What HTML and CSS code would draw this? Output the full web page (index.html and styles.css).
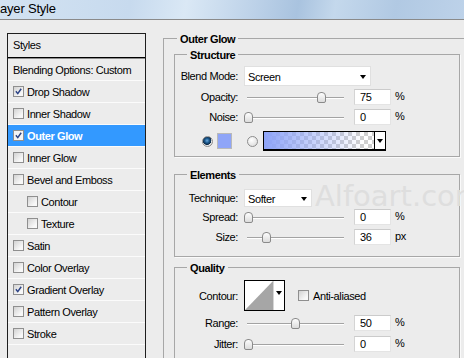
FILE: index.html
```html
<!DOCTYPE html>
<html lang="en">
<head>
    <meta charset="UTF-8">
    <title>Layer Style</title>
    <link rel="stylesheet" href="styles.css">
</head>
<body>

    <div class="titlebar"><span class="title">Layer Style</span></div>

    <div class="dialog">

        <div class="styles-list">
            <div class="list-head">Styles</div>
            <div class="list-item first">Blending Options: Custom</div>
            <div class="list-item"><span class="cb on"><svg viewBox="0 0 11 11"><path d="M2.3 5.3l2.3 2.8 4.2-6"/></svg></span>Drop Shadow</div>
            <div class="list-item"><span class="cb"></span>Inner Shadow</div>
            <div class="list-item selected"><span class="cb on"><svg viewBox="0 0 11 11"><path d="M2.3 5.3l2.3 2.8 4.2-6"/></svg></span>Outer Glow</div>
            <div class="list-item"><span class="cb"></span>Inner Glow</div>
            <div class="list-item"><span class="cb"></span>Bevel and Emboss</div>
            <div class="list-item sub"><span class="cb"></span>Contour</div>
            <div class="list-item sub"><span class="cb"></span>Texture</div>
            <div class="list-item"><span class="cb"></span>Satin</div>
            <div class="list-item"><span class="cb"></span>Color Overlay</div>
            <div class="list-item"><span class="cb on"><svg viewBox="0 0 11 11"><path d="M2.3 5.3l2.3 2.8 4.2-6"/></svg></span>Gradient Overlay</div>
            <div class="list-item"><span class="cb"></span>Pattern Overlay</div>
            <div class="list-item"><span class="cb"></span>Stroke</div>
            <div class="list-item"></div>
        </div>

        <div class="group outer">
            <div class="group-title">Outer Glow</div>

            <div class="group inner structure">
                <div class="group-title">Structure</div>
                <div class="field blend">
                    <label>Blend Mode:</label>
                    <div class="select blend-select">Screen</div>
                </div>
                <div class="field">
                    <label>Opacity:</label>
                    <div class="slider"><span class="thumb" style="left: 77px"></span></div>
                    <div class="num">75</div><span class="unit">%</span>
                </div>
                <div class="field">
                    <label>Noise:</label>
                    <div class="slider"><span class="thumb" style="left: 4px"></span></div>
                    <div class="num">0</div><span class="unit">%</span>
                </div>
                <div class="color-row">
                    <span class="radio on"></span>
                    <span class="swatch"></span>
                    <span class="radio second"></span>
                    <div class="gradient">
                        <span class="fill"></span>
                        <span class="drop"></span>
                    </div>
                </div>
            </div>

            <div class="group inner elements">
                <div class="group-title">Elements</div>
                <div class="field technique">
                    <label>Technique:</label>
                    <div class="select technique-select">Softer</div>
                </div>
                <div class="field">
                    <label>Spread:</label>
                    <div class="slider"><span class="thumb" style="left: 4px"></span></div>
                    <div class="num">0</div><span class="unit">%</span>
                </div>
                <div class="field">
                    <label>Size:</label>
                    <div class="slider"><span class="thumb" style="left: 22px"></span></div>
                    <div class="num">36</div><span class="unit">px</span>
                </div>
            </div>

            <div class="group inner quality">
                <div class="group-title">Quality</div>
                <div class="field contour-row">
                    <label>Contour:</label>
                    <div class="contour">
                        <svg class="curve" viewBox="0 0 29 29" preserveAspectRatio="none"><polygon points="0,29 29,0 29,29"/></svg>
                        <span class="drop"></span>
                    </div>
                    <span class="cb aa"></span><span>Anti-aliased</span>
                </div>
                <div class="field range">
                    <label>Range:</label>
                    <div class="slider"><span class="thumb" style="left: 51px"></span></div>
                    <div class="num">50</div><span class="unit">%</span>
                </div>
                <div class="field">
                    <label>Jitter:</label>
                    <div class="slider"><span class="thumb" style="left: 4px"></span></div>
                    <div class="num">0</div><span class="unit">%</span>
                </div>
            </div>
        </div>

    </div>

    <div class="watermark">Alfoart.com</div>

</body>
</html>
```

FILE: styles.css
```css
* {
    box-sizing: border-box;
}

body {
    margin: 0;
    width: 464px;
    height: 358px;
    overflow: hidden;
    position: relative;
    background: #ececec;
    font-family: "Liberation Sans", Arial, sans-serif;
    font-size: 11px;
    letter-spacing: -0.4px;
    color: #000;
}

.titlebar {
    height: 20px;
    border-bottom: 1px solid #8a8a8a;
    background: linear-gradient(100deg, #d3e3f2 0%, #c7daee 28%, #dae8f5 40%, #bcd1e8 55%, #a9c3df 64%, #c4d8ec 72%, #b1c9e3 85%, #bdd2e9 100%);
    overflow: hidden;
}

.title {
    display: block;
    margin-left: -7px;
    font-size: 13px;
    line-height: 17px;
    letter-spacing: -0.2px;
}

.dialog {
    display: flex;
    align-items: flex-start;
}

/* left list */

.styles-list {
    flex: none;
    width: 139px;
    height: 340px;
    margin: 13px 0 0 7px;
    border: 1px solid #1e1e1e;
    overflow: hidden;
}

.list-head {
    height: 24px;
    line-height: 23px;
    padding-left: 5px;
    border-bottom: 1px solid #000;
}

.list-item {
    display: flex;
    align-items: center;
    gap: 3px;
    height: 22px;
    padding-left: 5px;
    border-bottom: 1px solid #fbfbfb;
}

.list-item.first {
    height: 23px;
    border-top: 1px solid #8c8c8c;
}

.list-item.sub {
    padding-left: 19px;
}

.list-item.selected {
    background: #3399ff;
    color: #fff;
    font-weight: bold;
}

.cb {
    flex: none;
    width: 11px;
    height: 11px;
    border: 1px solid #8f8f8f;
    background: linear-gradient(135deg, #d2d2d2, #f8f8f8 75%);
}

.cb svg {
    display: block;
    width: 9px;
    height: 9px;
}

.cb path {
    fill: none;
    stroke: #2b4285;
    stroke-width: 1.8;
}

.selected .cb {
    background: #f4f4f4;
}

/* group boxes */

.group {
    border: 1px solid #a7a7a7;
    box-shadow: 1px 1px 0 #fafafa;
}

.group-title {
    width: max-content;
    margin: -6px 0 0 3px;
    padding: 0 3px;
    line-height: 13px;
    background: #ececec;
    font-weight: bold;
}

.outer {
    flex: none;
    width: 308px;
    margin: 18px 0 0 17px;
    padding: 0 10px;
}

.inner {
    margin-top: 8px;
}

.inner .group-title {
    margin-left: 12px;
}

.structure {
    padding-bottom: 5px;
}

.structure .field.blend {
    margin-top: 4px;
}

.elements {
    margin-top: 17px;
    padding-bottom: 9px;
}

.quality {
    margin-top: 10px;
    padding-bottom: 12px;
}

.field {
    display: flex;
    align-items: center;
    height: 20px;
}

.field label {
    flex: none;
    width: 63px;
    margin-right: 6px;
    text-align: right;
}

.field.blend {
    margin-bottom: 1px;
}

.field.technique {
    height: 19px;
    margin-top: 6px;
}

.field.contour-row {
    height: 31px;
    margin-top: 5px;
    margin-bottom: 2px;
}

.select {
    display: flex;
    align-items: center;
    justify-content: space-between;
    height: 20px;
    padding: 2px 4px 0 3px;
    background: #fff;
    border: 1px solid #e0e0e0;
}

.select::after,
.drop::after {
    content: "";
    border-left: 3.5px solid transparent;
    border-right: 3.5px solid transparent;
    border-top: 4px solid #000;
}

.blend-select {
    width: 127px;
}

.technique-select {
    width: 68px;
    height: 18px;
}

.slider {
    flex: none;
    position: relative;
    width: 100px;
    height: 100%;
    margin-right: 10px;
}

.slider::before {
    content: "";
    position: absolute;
    left: 3px;
    right: 0;
    top: 50%;
    border-top: 1px solid #a3a3a3;
    border-bottom: 1px solid #fff;
}

.thumb {
    position: absolute;
    top: 50%;
    width: 9px;
    height: 11px;
    margin: -5px 0 0 -4px;
    border: 1px solid #8a8a8a;
    border-radius: 4px 4px 2px 2px;
    background: linear-gradient(#fdfdfd, #dcdcdc);
}

.num {
    flex: none;
    width: 37px;
    height: 16px;
    padding-left: 5px;
    line-height: 14px;
    background: #fff;
    border: 1px solid #e4e4e4;
    border-top-color: #cbcbcb;
    border-left-color: #d4d4d4;
}

.unit {
    margin: -2px 0 0 4px;
}

/* colour row */

.color-row {
    display: flex;
    align-items: center;
    height: 20px;
    margin-top: 4px;
    padding-left: 27px;
}

.radio {
    flex: none;
    width: 11px;
    height: 11px;
    border-radius: 50%;
    border: 1px solid #8d8d8d;
    background: radial-gradient(circle at 40% 35%, #fff, #d6d6d6);
}

.radio.on {
    background: radial-gradient(circle at 45% 40%, #6aa9dc 0, #1d5b90 30%, #0b2a48 55%, #e8e8e8 62%, #cfcfcf 100%);
}

.radio.second {
    margin-left: 15px;
}

.swatch {
    flex: none;
    width: 15px;
    height: 16px;
    margin-left: 4px;
    background: #8fa5f8;
    border: 1px solid #b9b9b9;
}

.gradient {
    display: flex;
    width: 123px;
    height: 20px;
    margin-left: 5px;
    border: 1px solid #000;
    border-bottom-width: 2px;
}

.gradient .fill {
    flex: 1;
    background: linear-gradient(90deg, #8ea4f8, rgba(142, 164, 248, 0) 90%), repeating-conic-gradient(#cfcfcf 0 25%, #fff 0 50%) 0 0 / 8px 8px;
}

.drop {
    display: flex;
    align-items: center;
    justify-content: center;
    width: 11px;
    background: #fff;
    border-left: 1px solid #000;
}

/* contour */

.contour {
    display: flex;
    width: 41px;
    height: 31px;
    background: #fff;
    border: 1px solid #000;
}

.curve {
    width: 28px;
    height: 29px;
}

.curve polygon {
    fill: #a6a6a6;
}

.contour .drop {
    border-left-color: #d6d6d6;
    align-items: flex-start;
    padding-top: 10px;
}

.cb.aa {
    margin: 0 4px 0 13px;
}

.field.range {
    margin-bottom: 1px;
}

.watermark {
    position: absolute;
    left: 315px;
    top: 184px;
    font-family: "DejaVu Sans", sans-serif;
    font-size: 29px;
    line-height: 24px;
    letter-spacing: 0;
    color: #dedede;
    pointer-events: none;
    white-space: nowrap;
}
```
